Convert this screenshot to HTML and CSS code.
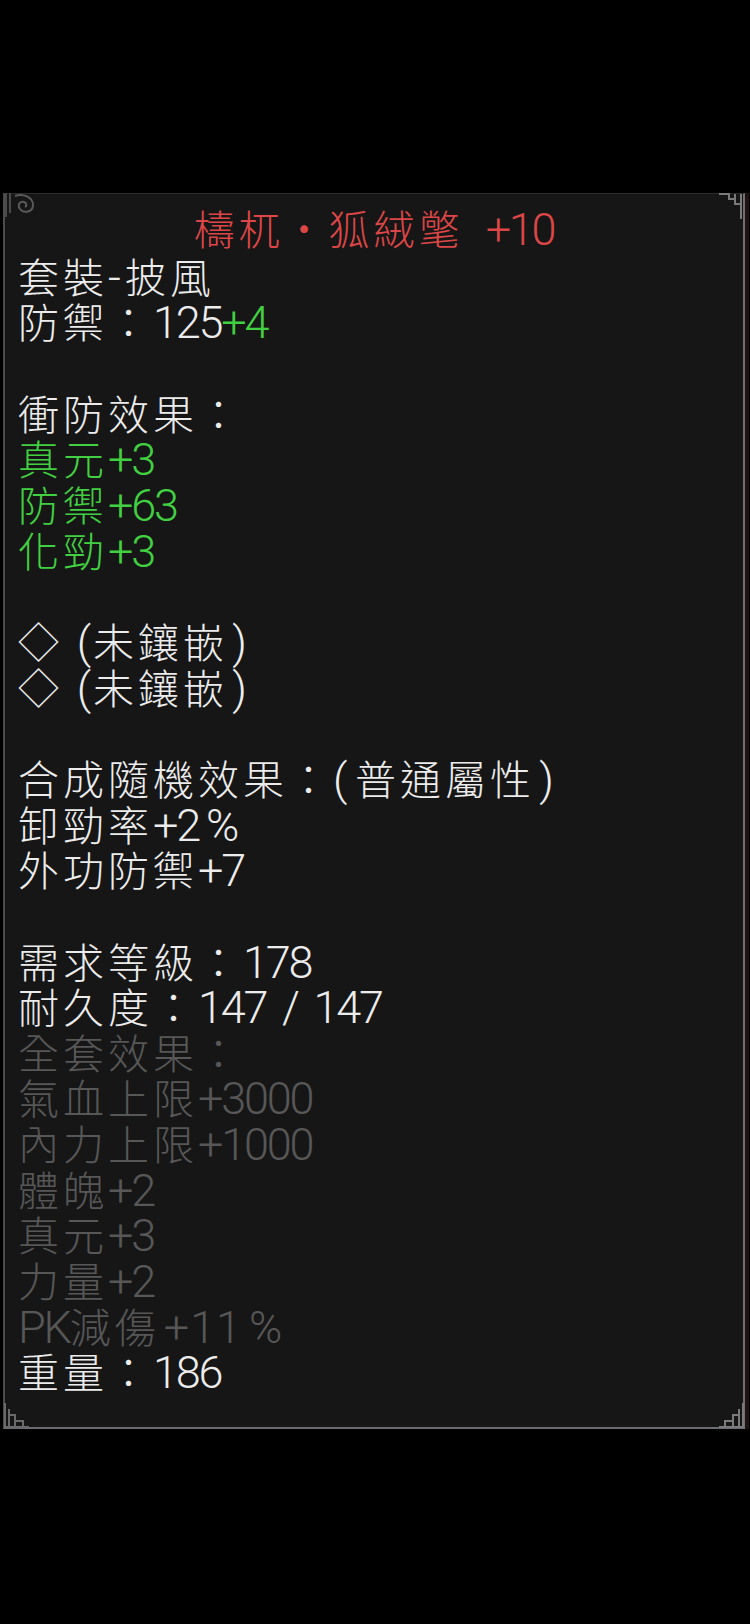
FILE: index.html
```html
<!DOCTYPE html>
<html lang="zh-Hant">
<head>
<meta charset="utf-8">
<title>檮杌・狐絨氅 +10</title>
<link rel="stylesheet" href="styles.css">
</head>
<body>
<div class="panel">
  <svg class="orn orn-tl" width="36" height="26" viewBox="0 0 36 26"><path d="M10 3 C18 0 28 4 28 12 C28 19 19 21 15 16 C12 12 15 8 19 9 C22 10 22 13 20 14" fill="none" stroke="#5a5a5a" stroke-width="2"/><path d="M1 0 V24 M5 0 V20" stroke="#4a4a4a" stroke-width="2"/></svg>
  <svg class="orn orn-tr" width="28" height="26" viewBox="0 0 28 26"><path d="M2 1 H12 V6 H18 V11 H24 M18 6 V1 M24 1 V26" fill="none" stroke="#7a7a7a" stroke-width="2"/></svg>
  <svg class="orn orn-bl" width="28" height="26" viewBox="0 0 28 26"><path d="M2 0 V24 H26 M6 6 V24 M6 12 H12 V24 M12 18 H20 V24" fill="none" stroke="#6a6a6a" stroke-width="2"/></svg>
  <svg class="orn orn-br" width="28" height="26" viewBox="0 0 28 26"><path d="M26 0 V24 H2 M22 6 V24 M22 12 H16 V24 M16 18 H8 V24" fill="none" stroke="#7a7a7a" stroke-width="2"/></svg>

  <div class="title red">檮杌・狐絨氅<span class="a gap">+10</span></div>
  <div class="line">套裝<span class="a cell hy">-</span>披風</div>
  <div class="line">防禦：<span class="a">125</span><span class="a green">+4</span></div>
  <div class="line blank"></div>
  <div class="line">衝防效果：</div>
  <div class="line green">真元<span class="a">+3</span></div>
  <div class="line green">防禦<span class="a">+63</span></div>
  <div class="line green">化勁<span class="a">+3</span></div>
  <div class="line blank"></div>
  <div class="line">◇<span class="a cell pl">(</span>未鑲嵌<span class="a cell pr">)</span></div>
  <div class="line">◇<span class="a cell pl">(</span>未鑲嵌<span class="a cell pr">)</span></div>
  <div class="line blank"></div>
  <div class="line">合成隨機效果：<span class="a cell pl2">(</span>普通屬性<span class="a cell pr">)</span></div>
  <div class="line">卸勁率<span class="a">+2</span><span class="a cell pct">%</span></div>
  <div class="line">外功防禦<span class="a">+7</span></div>
  <div class="line blank"></div>
  <div class="line">需求等級：<span class="a">178</span></div>
  <div class="line">耐久度：<span class="a sp">147 / 147</span></div>
  <div class="line dim">全套效果：</div>
  <div class="line dim">氣血上限<span class="a">+3000</span></div>
  <div class="line dim">內力上限<span class="a">+1000</span></div>
  <div class="line dim">體魄<span class="a">+2</span></div>
  <div class="line dim">真元<span class="a">+3</span></div>
  <div class="line dim">力量<span class="a">+2</span></div>
  <div class="line dim"><span class="a">PK</span>減傷<span class="a wide">+11</span><span class="a cell pct">%</span></div>
  <div class="line">重量：<span class="a">186</span></div>
</div>
</body>
</html>
```

FILE: styles.css
```css
html, body {
  margin: 0;
  padding: 0;
  background: #000;
}

body {
  width: 750px;
  min-height: 1624px;
  overflow: hidden;
}

.panel {
  position: relative;
  margin: 193px 5px 0 3px;
  background: #161616;
  border-top: 1px solid #2c2c2c;
  border-left: 2px solid #4c4c4c;
  border-right: 2px solid #707070;
  border-bottom: 2px solid #6c6c76;
  box-shadow: 4px 0 0 #1e1212;
  padding: 11px 0 33px 13px;
  font-family: "Noto Sans CJK TC", "Noto Sans CJK SC", sans-serif;
  font-weight: 300;
  font-size: 41px;
  letter-spacing: 4px;
  color: #ececec;
}

.title {
  height: 45.67px;
  line-height: 45.67px;
  margin-bottom: 2px;
  text-align: center;
  white-space: nowrap;
  padding-right: 13px;
}

.line {
  height: 45.67px;
  line-height: 45.67px;
  white-space: nowrap;
}

.a {
  font-family: Roboto, "Liberation Sans", sans-serif;
  font-weight: 300;
  font-size: 45px;
  letter-spacing: -2.2px;
  line-height: 45.67px;
}

.sp {
  word-spacing: 7px;
}

.wide {
  letter-spacing: 1px;
  margin-left: 4px;
}

.cell {
  display: inline-block;
  letter-spacing: 0;
}

.hy { width: 17px; text-align: left; }
.pl { width: 30px; text-align: right; padding-right: 2px; box-sizing: border-box; }
.pl2 { width: 22px; text-align: left; }
.pr { width: 23px; text-align: center; }
.pct { width: 46px; text-align: left; padding-left: 7px; box-sizing: border-box; }

.gap {
  margin-left: 22px;
}

.red { color: #dc4646; }
.green { color: #42cf42; }
.dim { color: #575757; }

.orn {
  position: absolute;
  display: block;
}
.orn-tl { left: 0; top: -1px; }
.orn-tr { right: -2px; top: -1px; }
.orn-bl { left: -2px; bottom: -2px; }
.orn-br { right: -2px; bottom: -2px; }
```
